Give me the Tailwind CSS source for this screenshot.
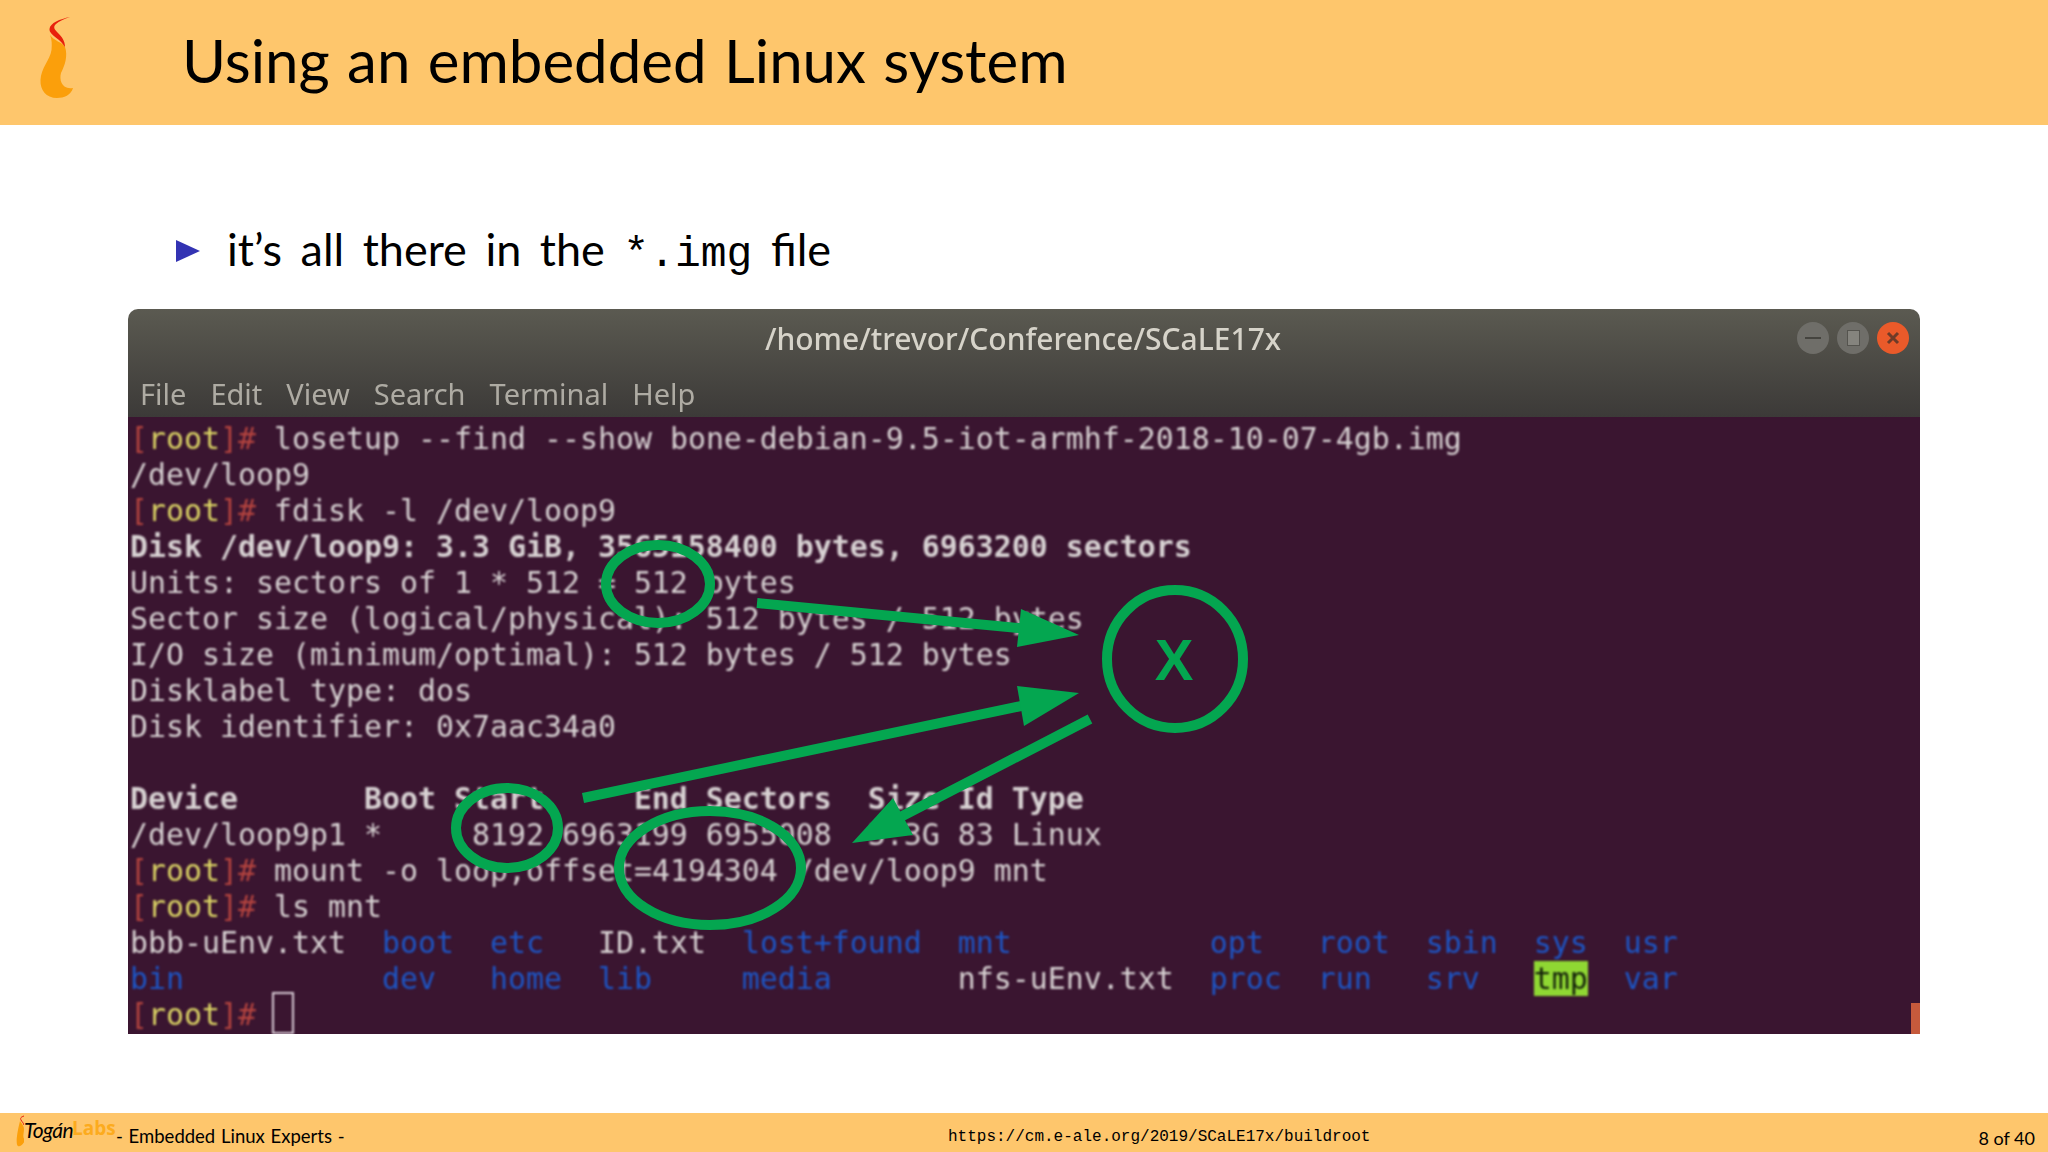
<!DOCTYPE html>
<html lang="en">
<head>
  <meta charset="UTF-8">
  <title>Using an embedded Linux system</title>
  <script src="https://cdn.jsdelivr.net/npm/@tailwindcss/browser@4"></script>
</head>
<body class="bg-white">
  <div class="w-[2048px] h-[1152px] flex flex-col overflow-hidden bg-white font-['Lato',sans-serif] text-black">

    <!-- title bar -->
    <header class="h-[125px] bg-[#fec66c] flex items-center shrink-0">
      <svg class="w-[182px] h-[125px] shrink-0" viewBox="0 0 182 125">
        <path d="M50 35C54 41 62 42 65 47C68 56 65 65 61 73C59 80 62 90 73 88C71 95 64 98 57 98C46 98 40 90 40.5 80C41 68 50 60 51.5 50C52 44 52 40 50 35Z" fill="#fb9f0b"/>
        <path d="M70 17C60 19 50 23 49.5 29C49 35 60 38 65 47C65 41 62 37 58 33C54 29 53 27 56 24C59 21 64 19 70 17Z" fill="#e8200c"/>
      </svg>
      <h1 class="text-[60px] leading-none [word-spacing:2px] mt-[-5px]">Using an embedded Linux system</h1>
    </header>

    <main class="flex-1 flex flex-col">
      <div class="h-[68px] mt-[92px] pl-[176px] flex items-center">
        <svg class="w-[24px] h-[24px] mr-[27px]" viewBox="0 0 24 24"><path d="M0 1L24 12L0 23Z" fill="#3333b3"/></svg>
        <p class="text-[45px] leading-none [word-spacing:7px]">it’s all there in the <span class="font-['Liberation_Mono',monospace] text-[43px]">*.img</span> file</p>
      </div>

      <!-- terminal screenshot -->
      <div class="relative mt-[24px] ml-[128px] w-[1792px] h-[725px]">
        <div class="h-[108px] bg-gradient-to-b from-[#5b5a51] to-[#3c3a38] rounded-t-[10px] flex flex-col font-['Noto_Sans',sans-serif]">
          <div class="h-[58px] flex items-center justify-center blur-[0.5px]">
            <span class="text-[30px] font-medium text-[#d6d3c9] ml-[-2px] mt-[1px]">/home/trevor/Conference/SCaLE17x</span>
          </div>
          <div class="flex items-center gap-[24px] pl-[12px] pt-[3px] h-[50px] text-[29px] text-[#aeaba3] blur-[0.5px]">
            <span>File</span><span>Edit</span><span>View</span><span>Search</span><span>Terminal</span><span>Help</span>
          </div>
        </div>

        <!-- window buttons -->
        <div class="absolute top-[13px] right-[11px] flex gap-[8px]">
          <div class="w-[32px] h-[32px] rounded-full bg-[#6f6e69] flex items-center justify-center"><div class="w-[16px] h-[2px] bg-[#45443f]"></div></div>
          <div class="w-[32px] h-[32px] rounded-full bg-[#6f6e69] flex items-center justify-center"><div class="w-[13px] h-[16px] bg-[#85847e] border border-[#55544f]"></div></div>
          <div class="w-[32px] h-[32px] rounded-full bg-[#ea5a2a] flex items-center justify-center">
            <svg class="w-[14px] h-[14px]" viewBox="0 0 14 14"><path d="M2 2L12 12M12 2L2 12" stroke="#6e3b28" stroke-width="3"/></svg>
          </div>
        </div>

        <div class="relative h-[617px] bg-[#3a1530] pt-[4px] pl-[2px] overflow-hidden">
          <div class="flex flex-col font-['DejaVu_Sans_Mono',monospace] text-[29.9px] leading-[36px] text-[#d8d2d3] whitespace-pre blur-[0.8px]">
            <div class="h-[36px]"><span class="text-[#b5443f]">[</span><span class="text-[#dcd565]">root</span><span class="text-[#b5443f]">]#</span> losetup --find --show bone-debian-9.5-iot-armhf-2018-10-07-4gb.img</div>
            <div class="h-[36px]">/dev/loop9</div>
            <div class="h-[36px]"><span class="text-[#b5443f]">[</span><span class="text-[#dcd565]">root</span><span class="text-[#b5443f]">]#</span> fdisk -l /dev/loop9</div>
            <div class="h-[36px] font-bold">Disk /dev/loop9: 3.3 GiB, 3565158400 bytes, 6963200 sectors</div>
            <div class="h-[36px]">Units: sectors of 1 * 512 = 512 bytes</div>
            <div class="h-[36px]">Sector size (logical/physical): 512 bytes / 512 bytes</div>
            <div class="h-[36px]">I/O size (minimum/optimal): 512 bytes / 512 bytes</div>
            <div class="h-[36px]">Disklabel type: dos</div>
            <div class="h-[36px]">Disk identifier: 0x7aac34a0</div>
            <div class="h-[36px]"></div>
            <div class="h-[36px] font-bold">Device       Boot Start     End Sectors  Size Id Type</div>
            <div class="h-[36px]">/dev/loop9p1 *     8192 6963199 6955008  3.3G 83 Linux</div>
            <div class="h-[36px]"><span class="text-[#b5443f]">[</span><span class="text-[#dcd565]">root</span><span class="text-[#b5443f]">]#</span> mount -o loop,offset=4194304 /dev/loop9 mnt</div>
            <div class="h-[36px]"><span class="text-[#b5443f]">[</span><span class="text-[#dcd565]">root</span><span class="text-[#b5443f]">]#</span> ls mnt</div>
            <div class="h-[36px] text-[#1d55c4]"><span class="text-[#d8d2d3]">bbb-uEnv.txt</span>  boot  etc   <span class="text-[#d8d2d3]">ID.txt</span>  lost+found  mnt           opt   root  sbin  sys  usr</div>
            <div class="h-[36px] text-[#1d55c4]">bin           dev   home  lib     media       <span class="text-[#d8d2d3]">nfs-uEnv.txt</span>  proc  run   srv   <span class="bg-[#8fd733] text-[#14210a]">tmp</span>  var</div>
            <div class="h-[36px]"><span class="text-[#b5443f]">[</span><span class="text-[#dcd565]">root</span><span class="text-[#b5443f]">]#</span> <span class="inline-block w-[22px] h-[42px] border-2 border-[#d9ccd6] align-top mt-[-5px] ml-[-2px]"></span></div>
          </div>
          <!-- scrollbar end -->
          <div class="absolute right-0 bottom-0 w-[9px] h-[31px] bg-[#c65a3c]"></div>
        </div>

        <!-- green annotations -->
        <svg class="absolute left-[-128px] top-[-309px] w-[2048px] h-[1152px] pointer-events-none" viewBox="0 0 2048 1152" fill="none">
          <g stroke="#04a650" stroke-width="10">
            <ellipse cx="658" cy="584" rx="52" ry="39"/>
            <ellipse cx="1175" cy="659" rx="68" ry="69"/>
            <ellipse cx="507" cy="828" rx="51" ry="40"/>
            <ellipse cx="710" cy="868" rx="91" ry="57"/>
            <path d="M757 603L1040 630M583 798L1040 702M1090 719L885 825"/>
          </g>
          <g fill="#04a650">
            <path d="M1079 635L1021 609L1017 647Z"/>
            <path d="M1079 693L1017 686L1024 726Z"/>
            <path d="M852 843L893 798L913 835Z"/>
          </g>
          <text x="1174" y="680" text-anchor="middle" font-family="Liberation Sans, sans-serif" font-weight="700" font-size="58" fill="#04a650">X</text>
        </svg>
      </div>
    </main>

    <!-- footer bar -->
    <footer class="h-[39px] bg-[#fec66c] shrink-0 flex items-center relative text-[17px]">
      <svg class="w-[24px] h-[39px] shrink-0" viewBox="0 0 24 39">
        <path d="M20 8C23 12 24 14 24 16C24 21 22 24 25 27C23 33 19 34 18 33C16 32 16 24 20 8Z" fill="#fb9f0b"/>
        <path d="M24 3C21 4 20 5 21 7C22 9 23 9 24 12" stroke="#e8200c" stroke-width="1" fill="none"/>
      </svg>
      <span class="italic text-[21px] tracking-[-0.5px] mt-[-6px] w-[48px]">Togán</span>
      <span class="font-bold text-[19px] text-[#fcab1e] mt-[-8px] w-[44px] font-['Open_Sans',sans-serif]">Labs</span>
      <span class="w-[832px] mt-[8px] text-[18.5px] [word-spacing:1px] whitespace-pre">- Embedded Linux Experts -</span>
      <span class="font-['Liberation_Mono',monospace] text-[16px] mt-[8px]">https://cm.e-ale.org/2019/SCaLE17x/buildroot</span>
      <span class="absolute right-[13px] top-[12px] text-[18px]">8 of 40</span>
    </footer>
  </div>
</body>
</html>
